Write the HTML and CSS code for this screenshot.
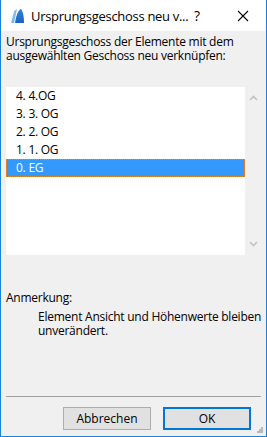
FILE: index.html
```html
<!DOCTYPE html>
<html lang="de">
<head>
    <meta charset="UTF-8">
    <title>Ursprungsgeschoss neu verknüpfen</title>
    <link rel="stylesheet" href="styles.css">
</head>
<body>
<div class="window">
    <div class="titlebar">
        <svg class="app-icon" width="16" height="16" viewBox="0 0 16 16">
            <defs>
                <linearGradient id="g1" x1="0" y1="0" x2="1" y2="1">
                    <stop offset="0" stop-color="#a9d4f5"/>
                    <stop offset="1" stop-color="#5aa6e8"/>
                </linearGradient>
                <linearGradient id="g2" x1="0" y1="0" x2="0" y2="1">
                    <stop offset="0" stop-color="#2f86dc"/>
                    <stop offset="1" stop-color="#1a63c0"/>
                </linearGradient>
            </defs>
            <path d="M1 15 L4 3 L7 1 L4 15 Z" fill="url(#g1)"/>
            <path d="M5 15 C6 8 8 2 11 1 C13 3 14 9 14 15 Z" fill="url(#g2)"/>
        </svg>
        <span class="title">Ursprungsgeschoss neu v...</span>
        <span class="help">?</span>
        <svg class="close" width="12" height="12" viewBox="0 0 12 12">
            <path d="M1 1 L11 11 M11 1 L1 11" stroke="#000" stroke-width="1.1"/>
        </svg>
    </div>
    <div class="content">
        <p class="prompt">Ursprungsgeschoss der Elemente mit dem<br>ausgewählten Geschoss neu verknüpfen:</p>
        <div class="listbox">
            <ul class="items">
                <li>4. 4.OG</li>
                <li>3. 3. OG</li>
                <li>2. 2. OG</li>
                <li>1. 1. OG</li>
                <li class="selected">0. EG</li>
            </ul>
            <div class="scrollbar">
                <svg width="9" height="6" viewBox="0 0 9 6"><path d="M1 5 L4.5 1.5 L8 5" fill="none" stroke="#c2c2c2" stroke-width="1.6"/></svg>
                <svg width="9" height="6" viewBox="0 0 9 6"><path d="M1 1 L4.5 4.5 L8 1" fill="none" stroke="#c2c2c2" stroke-width="1.6"/></svg>
            </div>
        </div>
        <p class="label">Anmerkung:</p>
        <p class="note">Element Ansicht und Höhenwerte bleiben<br>unverändert.</p>
    </div>
    <div class="footer">
        <button class="btn">Abbrechen</button>
        <button class="btn default">OK</button>
    </div>
    <svg class="grip" width="7" height="7" viewBox="0 0 7 7">
        <rect x="5" y="1" width="2" height="2" fill="#b8b8b8"/>
        <rect x="3" y="3" width="2" height="2" fill="#b8b8b8"/>
        <rect x="5" y="3" width="2" height="2" fill="#b8b8b8"/>
        <rect x="1" y="5" width="2" height="2" fill="#b8b8b8"/>
        <rect x="3" y="5" width="2" height="2" fill="#b8b8b8"/>
        <rect x="5" y="5" width="2" height="2" fill="#b8b8b8"/>
    </svg>
</div>
</body>
</html>
```

FILE: styles.css
```css
html, body {
    margin: 0;
    padding: 0;
}

body {
    font-family: "Open Sans", "Noto Sans", sans-serif;
    font-size: 12px;
    color: #000;
}

p, ul {
    margin: 0;
    padding: 0;
}

.window {
    position: relative;
    width: 267px;
    height: 437px;
    box-sizing: border-box;
    border: 1px solid #1883d7;
    border-top: none;
    background: #f0f0f0;
    display: flex;
    flex-direction: column;
}

.titlebar {
    height: 31px;
    background: #fff;
    display: flex;
    align-items: center;
    flex-shrink: 0;
    white-space: nowrap;
}

.app-icon {
    margin-left: 9px;
    margin-right: 5px;
}

.title {
    font-size: 13px;
    flex: 1;
    letter-spacing: -0.3px;
}

.help {
    font-size: 14px;
    width: 10px;
    margin-right: 33px;
}

.close {
    margin-right: 17px;
}

.content {
    padding: 0 5px;
    flex: 1;
    letter-spacing: -0.25px;
    white-space: nowrap;
}

.prompt {
    margin-top: 4px;
    line-height: 14px;
}

.listbox {
    margin-top: 24px;
    height: 168px;
    display: flex;
}

.items {
    list-style: none;
    background: #fff;
    width: 239px;
}

.items li {
    height: 18px;
    line-height: 18px;
    padding-left: 10px;
    box-sizing: border-box;
}

.items li.selected {
    background: #3399ff;
    color: #fff;
    border: 1px dotted #e08a2a;
    padding-left: 9px;
    line-height: 16px;
}

.scrollbar {
    width: 16px;
    display: flex;
    flex-direction: column;
    justify-content: space-between;
    align-items: center;
    padding: 8px 0;
    box-sizing: border-box;
}

.label {
    margin-top: 36px;
    line-height: 14px;
}

.note {
    margin-top: 5px;
    margin-left: 32px;
    line-height: 14px;
}

.footer {
    margin: 0 5px;
    border-top: 1px solid #a0a0a0;
    height: 40px;
    display: flex;
    justify-content: flex-end;
    align-items: flex-start;
    padding-top: 10px;
    padding-right: 10px;
    gap: 12px;
    box-sizing: border-box;
}

.btn {
    width: 88px;
    height: 23px;
    margin: 0;
    padding: 0;
    font-family: inherit;
    font-size: 12px;
    background: #e1e1e1;
    border: 1px solid #adadad;
    color: #000;
}

.btn.default {
    border: 2px solid #0078d7;
}

.grip {
    position: absolute;
    right: 3px;
    bottom: 3px;
}
```
